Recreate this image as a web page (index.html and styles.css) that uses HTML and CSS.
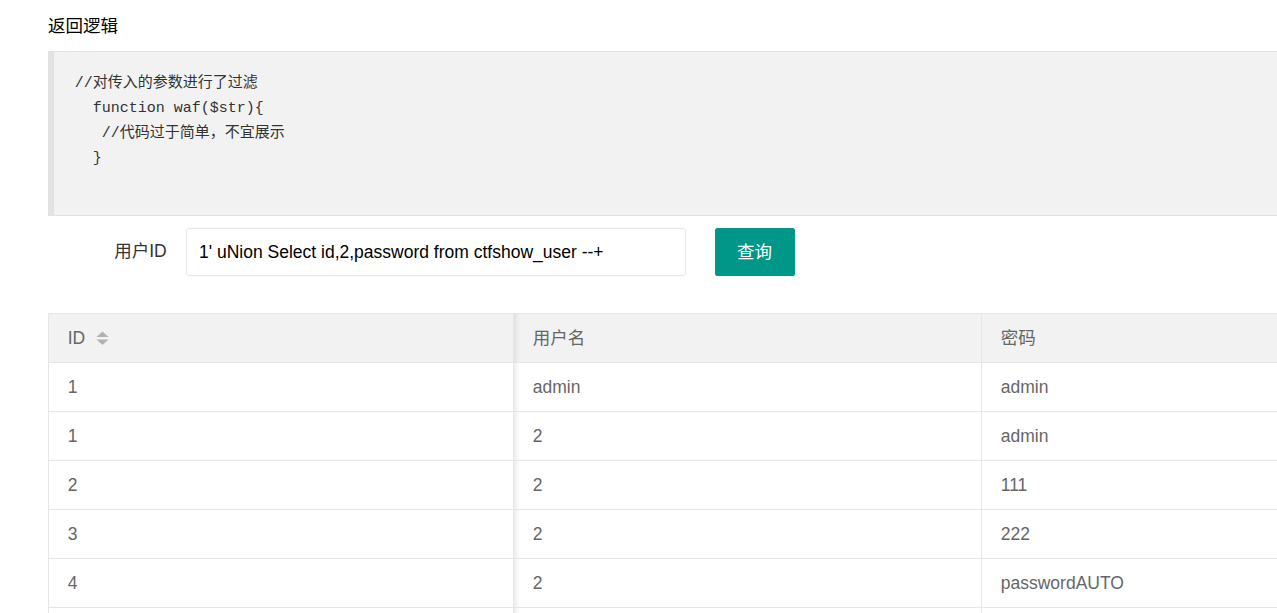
FILE: index.html
```html
<!DOCTYPE html>
<html lang="zh-CN">
<head>
<meta charset="utf-8">
<title>返回逻辑</title>
<link rel="stylesheet" href="styles.css">
</head>
<body>
<div class="page">
  <h3 class="title">返回逻辑</h3>
  <pre class="code"><div class="ln">//对传入的参数进行了过滤</div><div class="ln">  function waf($str){</div><div class="ln">   //代码过于简单，不宜展示</div><div class="ln">  }</div><div class="ln"> </div></pre>
  <form class="form-row">
    <label class="label">用户ID</label>
    <input class="input" type="text" value="1' uNion Select id,2,password from ctfshow_user --+">
    <button class="btn" type="button">查询</button>
  </form>
  <table class="table">
    <colgroup>
      <col class="c1"><col class="c2"><col class="c3">
    </colgroup>
    <thead>
      <tr>
        <th><span class="th-in">ID<svg class="sort" width="13" height="15" viewBox="0 0 13 15"><path d="M0.5 6 L6.5 0.5 L12.5 6 Z" fill="#b2b2b2"/><path d="M0.5 8.5 L12.5 8.5 L6.5 14 Z" fill="#b2b2b2"/></svg></span></th>
        <th>用户名</th>
        <th>密码</th>
      </tr>
    </thead>
    <tbody>
      <tr><td>1</td><td>admin</td><td>admin</td></tr>
      <tr><td>1</td><td>2</td><td>admin</td></tr>
      <tr><td>2</td><td>2</td><td>111</td></tr>
      <tr><td>3</td><td>2</td><td>222</td></tr>
      <tr><td>4</td><td>2</td><td>passwordAUTO</td></tr>
      <tr class="empty"><td></td><td></td><td></td></tr>
    </tbody>
  </table>
</div>
</body>
</html>
```

FILE: styles.css
```css
html {
  overflow: hidden;
}
body {
  margin: 0;
  background: #fff;
  color: #333;
  font-family: "Liberation Sans", Arial, "Noto Sans CJK SC", sans-serif;
  font-size: 17.5px;
}
.page {
  width: 1449px;
  padding: 14px 0 0 48px;
}
.title {
  margin: 0 0 12px;
  font-size: 17.5px;
  font-weight: normal;
  line-height: 25px;
  color: #000;
}
.code {
  margin: 0;
  padding: 18.75px 18.75px 18.75px 20.75px;
  border: 1px solid #e2e2e2;
  border-left-width: 6px;
  background: #f2f2f2;
  color: #333;
  font-family: "Liberation Mono", "Courier New", "Noto Sans CJK SC", monospace;
  font-size: 15px;
  line-height: 25px;
  white-space: pre;
}
.ln {
  height: 25px;
}
.form-row {
  display: flex;
  align-items: center;
  margin: 12.5px 0 0;
}
.label {
  width: 137.5px;
  box-sizing: border-box;
  padding: 0 18.75px;
  text-align: right;
  color: #333;
  line-height: 47.5px;
}
.input {
  width: 500px;
  height: 48px;
  box-sizing: border-box;
  border: 1px solid #e6e6e6;
  border-radius: 2.5px;
  padding: 0 12.5px;
  margin: 0;
  font-family: "Liberation Sans", Arial, "Noto Sans CJK SC", sans-serif;
  font-size: 17.5px;
  color: #000;
  background: #fff;
  outline: none;
}
.btn {
  margin-left: 29px;
  width: 80px;
  height: 48px;
  padding: 0 0 4px;
  border: 0;
  border-radius: 2.5px;
  background: #009688;
  color: #fff;
  font-family: "Liberation Sans", Arial, "Noto Sans CJK SC", sans-serif;
  font-size: 17.5px;
}
.table {
  margin-top: 37px;
  border-collapse: separate;
  border-spacing: 0;
  table-layout: fixed;
  width: 1400px;
  border-top: 1px solid #e6e6e6;
  border-left: 1px solid #e6e6e6;
  color: #666;
}
.c1 { width: 465px; }
.c2 { width: 468px; }
.c3 { width: 467px; }
.table th,
.table td {
  padding: 11.5px 18.75px;
  line-height: 25px;
  text-align: left;
  font-weight: normal;
  border-right: 1px solid #e6e6e6;
  border-bottom: 1px solid #e6e6e6;
  white-space: nowrap;
  overflow: hidden;
}
.table th {
  background-color: #f2f2f2;
}
.table th:nth-child(2),
.table td:nth-child(2) {
  background-image: linear-gradient(to right, rgba(0, 0, 0, 0.07), rgba(0, 0, 0, 0) 6px);
}
.empty td {
  height: 25px;
}
.th-in {
  display: inline-flex;
  align-items: center;
}
.sort {
  margin-left: 11px;
  margin-top: 1px;
}
```
